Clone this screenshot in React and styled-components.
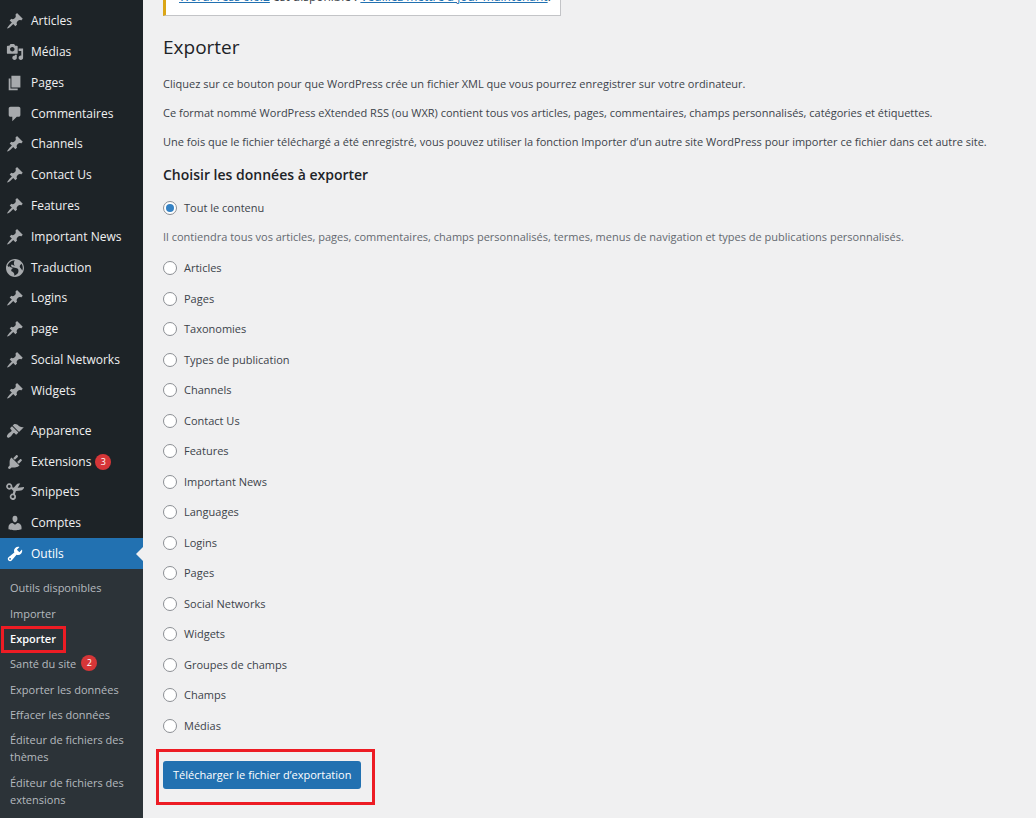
import styled, { createGlobalStyle } from "styled-components";

const GlobalStyle = createGlobalStyle`
  * {
    box-sizing: border-box;
  }

  body {
    margin: 0;
    background: #f0f0f1;
    color: #3c434a;
    font-family: "Segoe UI", "Open Sans", "Noto Sans", sans-serif;
    font-size: 11px;
    overflow: hidden;
  }
`;

const Layout = styled.div`
  display: flex;
  height: 100vh;
  overflow: hidden;
`;

const Sidebar = styled.nav`
  flex: 0 0 143px;
  align-self: stretch;
  display: flex;
  flex-direction: column;
  padding-top: 6px;
  background: #1d2327;
`;

const MenuGroup = styled.ul`
  display: grid;
  grid-auto-rows: 1fr;
  flex: none;
  min-height: ${props => props.$height}px;
  margin: 0 0 ${props => props.$space || 0}px;
  padding: 0;
  list-style: none;
`;

const MenuLink = styled.a`
  position: relative;
  display: flex;
  align-items: center;
  height: 100%;
  padding-left: 6px;
  gap: 7px;
  font-size: 12px;
  line-height: 18px;
  color: ${props => (props.$active ? "#ffffff" : "#f0f0f1")};
  background: ${props => (props.$active ? "#2271b1" : "transparent")};
  text-decoration: none;
  white-space: nowrap;

  svg {
    flex: none;
    fill: ${props => (props.$active ? "#ffffff" : "#a7aaad")};
  }

  &::after {
    content: "";
    display: ${props => (props.$active ? "block" : "none")};
    position: absolute;
    right: 0;
    top: 50%;
    margin-top: -7px;
    border: 7px solid transparent;
    border-left: 0;
    border-right-color: #f0f0f1;
  }
`;

const MenuLabel = styled.span`
  display: flex;
  align-items: center;
  gap: 4px;
`;

const Badge = styled.span`
  display: inline-block;
  min-width: 16px;
  height: 16px;
  margin-left: ${props => props.$space || 0}px;
  border-radius: 8px;
  background: #d63638;
  color: #ffffff;
  font-size: 9px;
  line-height: 16px;
  text-align: center;
  vertical-align: top;
`;

const Submenu = styled.ul`
  flex: 1;
  margin: 0;
  padding: 6px 0;
  background: #2c3338;
  list-style: none;
`;

const SubmenuItem = styled.li`
  position: relative;
  padding: 4px 10px;

  &:nth-child(3n + 1) {
    padding-bottom: 5px;
  }
`;

const SubmenuLink = styled.a`
  display: block;
  font-size: 11px;
  line-height: 17px;
  font-weight: ${props => (props.$current ? 600 : 400)};
  color: ${props => (props.$current ? "#ffffff" : "#b5babf")};
  text-decoration: none;
`;

const Highlight = styled.span`
  position: absolute;
  inset: ${props => props.$inset};
  border: 3px solid #ed1c24;
  pointer-events: none;
`;

const Content = styled.main`
  flex: 1;
  min-width: 0;
  padding-left: 20px;
`;

const Notice = styled.div`
  width: fit-content;
  margin-top: -20px;
  padding: 7px 9px 9px 13px;
  border: 1px solid #c3c4c7;
  border-left: 3px solid #dba617;
  background: #ffffff;
  font-size: 12px;
  line-height: 18px;

  a {
    color: #2271b1;
  }
`;

const Title = styled.h1`
  margin: 18px 0 0;
  color: #1d2327;
  font-size: 19px;
  font-weight: 400;
  line-height: 26px;
`;

const Intro = styled.div`
  display: grid;
  gap: 11px;
  margin-top: 15px;
`;

const Text = styled.p`
  margin: 0;
  line-height: 18px;
`;

const Subtitle = styled.h2`
  margin: 13px 0 0;
  color: #1d2327;
  font-size: 14px;
  font-weight: 600;
  line-height: 22px;
`;

const Form = styled.form`
  margin-top: 13px;
`;

const Choice = styled.label`
  display: flex;
  align-items: center;
  gap: 7px;
  width: fit-content;
  line-height: 18px;
`;

const Radio = styled.input`
  appearance: none;
  display: grid;
  place-items: center;
  width: 14px;
  height: 14px;
  margin: 0;
  border: 1px solid #8c8f94;
  border-radius: 50%;
  background: #ffffff;

  &:checked::before {
    content: "";
    width: 8px;
    height: 8px;
    border-radius: 50%;
    background: #3582c4;
  }
`;

const Description = styled.p`
  margin: 11px 0 7px;
  color: #646970;
  line-height: 18px;
`;

const ChoiceList = styled.div`
  display: grid;
  grid-auto-rows: 1fr;
  align-items: center;
  min-height: 488px;
`;

const Submit = styled.div`
  position: relative;
  width: fit-content;
  margin-top: 20px;
`;

const SubmitButton = styled.button`
  display: block;
  height: 28px;
  padding: 0 10px;
  border: 0;
  border-radius: 3px;
  background: #2271b1;
  color: #ffffff;
  font-family: inherit;
  font-size: 11px;
  line-height: 26px;
  white-space: nowrap;
`;

const icons = {
  pin: "M10.44 3.02l1.82-1.82 6.36 6.35-1.83 1.82c-1.05-.68-2.48-.57-3.41.36l-.75.75c-.92.93-1.04 2.35-.35 3.41l-1.83 1.82-2.41-2.41-2.8 2.79c-.42.42-3.38 2.71-3.8 2.29s1.86-3.39 2.28-3.81l2.79-2.79L4.1 9.36l1.83-1.82c1.05.69 2.48.57 3.4-.36l.75-.75c.93-.92 1.05-2.35.36-3.41z",
  media:
    "M13 11V4c0-.55-.45-1-1-1h-1.67L9 1H5L3.67 3H2c-.55 0-1 .45-1 1v7c0 .55.45 1 1 1h10c.55 0 1-.45 1-1zM7 4.5c1.38 0 2.5 1.12 2.5 2.5S8.38 9.5 7 9.5 4.5 8.38 4.5 7 5.62 4.5 7 4.5zM14 6h5v10.5c0 1.38-1.12 2.5-2.5 2.5S14 17.88 14 16.5s1.12-2.5 2.5-2.5c.17 0 .34.02.5.05V9h-3V6zm-4 8.05V13h2v3.5c0 1.38-1.12 2.5-2.5 2.5S7 17.88 7 16.5 8.12 14 9.5 14c.17 0 .34.02.5.05z",
  page: "M6 15V2h10v13H6zm-1 1h8v2H3V5h2v11z",
  comment:
    "M5 2h9c1.1 0 2 .9 2 2v7c0 1.1-.9 2-2 2h-2l-5 5v-5H5c-1.1 0-2-.9-2-2V4c0-1.1.9-2 2-2z",
  globe:
    "M9 0C4.03 0 0 4.03 0 9s4.03 9 9 9 9-4.03 9-9-4.03-9-9-9zm3.46 11.95c0 1.47-.8 3.3-4.06 4.7.3-4.17-2.52-3.69-3.2-5 .126-1.1.804-2.063 1.8-2.55-1.552-.266-3-.96-4.18-2 .05.47.28.904.64 1.21-.782-.295-1.458-.817-1.94-1.5.977-3.225 3.883-5.482 7.25-5.63-.84 1.38-1.5 4.13 0 5.57C7.23 7 6.26 5 5.41 5.79c-1.13 1.06.33 2.51 3.42 3.08 3.29.59 3.66 1.58 3.63 3.08zm1.34-4c-.32-1.11.62-2.23 1.69-3.14 1.356 1.955 1.67 4.45.84 6.68-.77-1.89-2.17-2.32-2.53-3.57v.03z",
  brush:
    "M14.48 11.06L7.41 3.99l1.5-1.5c.5-.56 2.3-.47 3.51.32 1.21.8 1.43 1.28 2.91 2.1 1.18.64 2.45 1.26 4.45.85zm-.71.71L6.7 4.7 4.93 6.47c-.39.39-.39 1.02 0 1.41l1.06 1.06c.39.39.39 1.03 0 1.42-.6.6-1.43 1.11-2.21 1.69-.35.26-.7.53-1.01.84C1.43 14.23.4 16.08 1.4 17.07c.99 1 2.84-.03 4.18-1.36.31-.31.58-.66.85-1.02.57-.78 1.08-1.61 1.69-2.21.39-.39 1.02-.39 1.41 0l1.06 1.06c.39.39 1.02.39 1.41 0z",
  plug: "M13.11 4.36L9.87 7.6 8 5.73l3.24-3.24c.35-.34 1.05-.2 1.56.32.52.51.66 1.21.31 1.55zm-8 1.77l.91-1.12 9.01 9.01-1.19.84c-.71.71-2.63 1.16-3.82 1.16H6.14L4.9 17.26c-.59.59-1.54.59-2.12 0-.59-.58-.59-1.53 0-2.12l1.24-1.24v-3.88c0-1.13.4-3.19 1.09-3.89zm7.26 3.97l3.24-3.24c.34-.35 1.04-.21 1.55.31.52.51.66 1.21.31 1.55l-3.24 3.25z",
  scissors:
    "M3.6.4a3.5 3.5 0 0 1 3.4 4.2l1.600.8L11.500 2c.7-.9 1.700-1.400 2.900-1.400h1.400L13 5.400l7.200-1c-.3 2.200-1.700 3.600-3.800 3.900l-5.400.7-1.100 3.600a3.500 3.500 0 1 1-2.300-.8l.7-3L5.900 6.600A3.500 3.500 0 1 1 3.600.4zm0 1.900a1.600 1.600 0 1 0 0 3.200 1.600 1.600 0 0 0 0-3.200zm4 11.300a1.600 1.600 0 1 0 0 3.200 1.600 1.600 0 0 0 0-3.200z",
  user: "M10 9.25c-2.27 0-2.73-3.44-2.73-3.44C7 4.02 7.82 2 9.97 2c2.16 0 2.98 2.02 2.71 3.81 0 0-.41 3.44-2.68 3.44zm0 2.57L12.72 10c2.39 0 4.52 2.33 4.52 4.53v2.49s-3.65 1.13-7.24 1.13c-3.65 0-7.24-1.13-7.24-1.13v-2.49c0-2.25 1.94-4.48 4.47-4.48z",
  wrench:
    "M16.68 9.77c-1.34 1.34-3.3 1.67-4.95.99l-5.41 6.52c-.99.99-2.59.99-3.58 0s-.99-2.59 0-3.57l6.52-5.42c-.68-1.65-.35-3.61.99-4.95 1.28-1.28 3.12-1.62 4.72-1.06l-2.89 2.89 2.82 2.82 2.86-2.87c.53 1.58.18 3.39-1.08 4.65zM3.81 16.21c.4.39 1.04.39 1.43 0 .4-.4.4-1.04 0-1.43-.39-.4-1.03-.4-1.43 0-.39.39-.39 1.03 0 1.43z",
};

const contentMenu = [
  { label: "Articles", icon: "pin" },
  { label: "Médias", icon: "media" },
  { label: "Pages", icon: "page" },
  { label: "Commentaires", icon: "comment" },
  { label: "Channels", icon: "pin" },
  { label: "Contact Us", icon: "pin" },
  { label: "Features", icon: "pin" },
  { label: "Important News", icon: "pin" },
  { label: "Traduction", icon: "globe" },
  { label: "Logins", icon: "pin" },
  { label: "page", icon: "pin" },
  { label: "Social Networks", icon: "pin" },
  { label: "Widgets", icon: "pin" },
];

const adminMenu = [
  { label: "Apparence", icon: "brush" },
  { label: "Extensions", icon: "plug", count: 3 },
  { label: "Snippets", icon: "scissors" },
  { label: "Comptes", icon: "user" },
  { label: "Outils", icon: "wrench", active: true },
];

const toolsMenu = [
  { label: "Outils disponibles" },
  { label: "Importer" },
  { label: "Exporter", current: true },
  { label: "Santé du site", count: 2 },
  { label: "Exporter les données" },
  { label: "Effacer les données" },
  { label: "Éditeur de fichiers des thèmes" },
  { label: "Éditeur de fichiers des extensions" },
];

const choices = [
  { value: "post", label: "Articles" },
  { value: "page", label: "Pages" },
  { value: "taxonomy", label: "Taxonomies" },
  { value: "post-type", label: "Types de publication" },
  { value: "channels", label: "Channels" },
  { value: "contact", label: "Contact Us" },
  { value: "features", label: "Features" },
  { value: "news", label: "Important News" },
  { value: "languages", label: "Languages" },
  { value: "logins", label: "Logins" },
  { value: "custom-page", label: "Pages" },
  { value: "social", label: "Social Networks" },
  { value: "widgets", label: "Widgets" },
  { value: "field-group", label: "Groupes de champs" },
  { value: "field", label: "Champs" },
  { value: "attachment", label: "Médias" },
];

const Icon = ({ name }) => (
  <svg
    width="18"
    height="18"
    viewBox={name === "globe" ? "0 0 18 18" : "0 0 20 20"}
    aria-hidden="true"
  >
    <path fillRule="evenodd" d={icons[name]} />
  </svg>
);

const Menu = ({ items, height, space }) => (
  <MenuGroup $height={height} $space={space}>
    {items.map(item => (
      <li key={item.label}>
        <MenuLink href="#" $active={item.active}>
          <Icon name={item.icon} />
          <MenuLabel>
            {item.label}
            {item.count && <Badge>{item.count}</Badge>}
          </MenuLabel>
        </MenuLink>
      </li>
    ))}
  </MenuGroup>
);

const App = () => {
  return (
    <>
      <GlobalStyle />
      <Layout>
        <Sidebar>
          <Menu items={contentMenu} height={400} space={10} />
          <Menu items={adminMenu} height={153} />
          <Submenu>
            {toolsMenu.map(item => (
              <SubmenuItem key={item.label}>
                <SubmenuLink href="#" $current={item.current}>
                  {item.label}
                  {item.count && <Badge $space={5}>{item.count}</Badge>}
                </SubmenuLink>
                {item.current && <Highlight $inset="0 77px -2px 1px" />}
              </SubmenuItem>
            ))}
          </Submenu>
        </Sidebar>
        <Content>
          <Notice>
            <a href="#">WordPress 6.6.2</a> est disponible !{" "}
            <a href="#">Veuillez mettre à jour maintenant</a>.
          </Notice>
          <Title>Exporter</Title>
          <Intro>
            <Text>
              Cliquez sur ce bouton pour que WordPress crée un fichier XML que
              vous pourrez enregistrer sur votre ordinateur.
            </Text>
            <Text>
              Ce format nommé WordPress eXtended RSS (ou WXR) contient tous vos
              articles, pages, commentaires, champs personnalisés, catégories et
              étiquettes.
            </Text>
            <Text>
              Une fois que le fichier téléchargé a été enregistré, vous pouvez
              utiliser la fonction Importer d’un autre site WordPress pour
              importer ce fichier dans cet autre site.
            </Text>
          </Intro>
          <Subtitle>Choisir les données à exporter</Subtitle>
          <Form>
            <Choice>
              <Radio type="radio" name="content" value="all" defaultChecked />
              Tout le contenu
            </Choice>
            <Description>
              Il contiendra tous vos articles, pages, commentaires, champs
              personnalisés, termes, menus de navigation et types de
              publications personnalisés.
            </Description>
            <ChoiceList>
              {choices.map(choice => (
                <Choice key={choice.value}>
                  <Radio type="radio" name="content" value={choice.value} />
                  {choice.label}
                </Choice>
              ))}
            </ChoiceList>
            <Submit>
              <SubmitButton type="button">
                Télécharger le fichier d’exportation
              </SubmitButton>
              <Highlight $inset="-12px -14px -16px -7px" />
            </Submit>
          </Form>
        </Content>
      </Layout>
    </>
  );
};

export default App;
